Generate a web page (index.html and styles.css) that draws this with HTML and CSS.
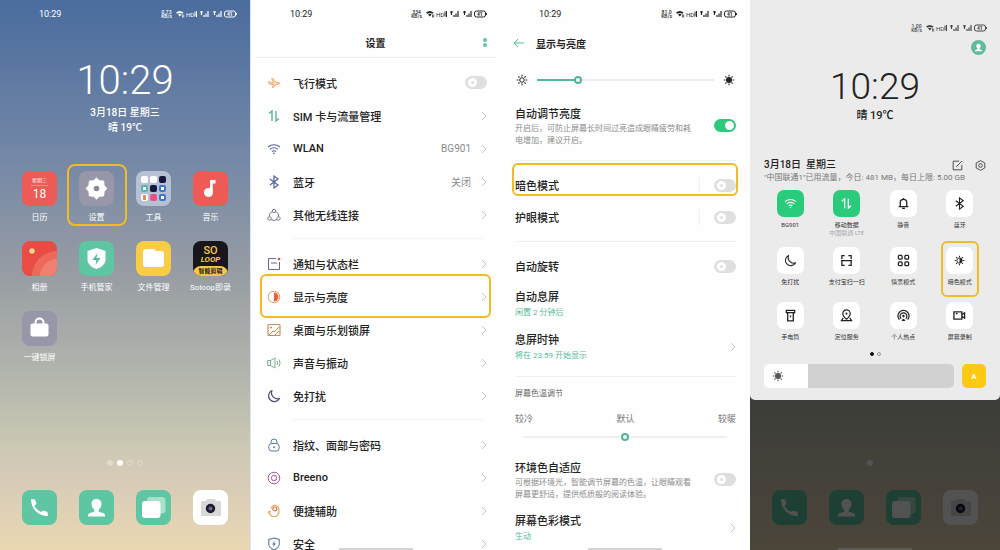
FILE: index.html
```html
<!DOCTYPE html>
<html lang="zh-CN">
<head>
<meta charset="UTF-8">
<meta name="viewport" content="width=device-width, initial-scale=1.0">
<title>暗色模式设置</title>
<link rel="stylesheet" href="styles.css">
</head>
<body>
    <!-- Icon symbols -->
    <svg class="sprite" aria-hidden="true">
        <symbol id="status" viewBox="0 0 61 10">
            <path d="M0 3.4Q3.8 .4 7.6 3.4L6.3 4.8Q3.8 3 1.3 4.8zM2 5.500Q3.8 4.200 5.600 5.500L3.800 7.600z" fill="currentColor"/>
            <path d="M6.500 8.500V5.500M7.700 5.500v3" stroke="currentColor" stroke-width=".7"/>
            <text x="10" y="7.500" font-size="6" fill="currentColor">HD</text>
            <path d="M19 2.500v5M20.500 2v6" stroke="currentColor" stroke-width="1"/>
            <path d="M24 3h3M25.500 2v4M28 8V6M30 8V4.500M32 8V2M37 3h3M38.500 2v4M41 8V6M43 8V4.500M45 8V2" fill="none" stroke="currentColor" stroke-width="1.200"/>
            <rect x="48.500" y="2" width="11" height="6" rx="2" fill="none" stroke="currentColor"/>
            <path d="M60.400 4v2" stroke="currentColor"/>
            <text x="51" y="7" font-size="5" font-weight="700" fill="currentColor">41</text>
        </symbol>
        <symbol id="chevron" viewBox="0 0 6 10"><path d="M1 1l4 4-4 4" fill="none" stroke="currentColor"/></symbol>
        <symbol id="plane" viewBox="0 0 14 14"><path d="M1.500 5.500l1.500.2 1 1 2.500-.2L4.500 2.500h1.500l3.500 4 2.500.2c1.300.4 1.300 1 0 1.400L9.500 8.300 6.500 11.500H5.300L6.500 8.400 2.500 8.200z" fill="#f7dcc0" stroke="currentColor"/></symbol>
        <symbol id="data" viewBox="0 0 14 14"><path d="M2 4.500L5 2v10M9 2v10l3-2.500" fill="none" stroke="currentColor" stroke-width="1.400"/></symbol>
        <symbol id="wifi" viewBox="0 0 14 14"><path d="M1 5q6-4.500 12 0M3 7.300q4-3 8 0M5 9.500q2-1.500 4 0" fill="none" stroke="currentColor" stroke-width="1.100"/><path d="M5.800 10.800h2.400L7 12.400z" fill="currentColor"/></symbol>
        <symbol id="bluetooth" viewBox="0 0 14 14"><path d="M3 4l8 6-4 3V1l4 3-8 6" fill="none" stroke="currentColor" stroke-width="1.200"/></symbol>
        <symbol id="share" viewBox="0 0 14 14"><g fill="none" stroke="currentColor"><circle cx="7" cy="3" r="1.700"/><circle cx="2.500" cy="10.500" r="1.700"/><circle cx="11.500" cy="10.500" r="1.700"/><path d="M5.300 3.500Q2 5 2.300 8.700M8.700 3.500Q12 5 11.700 8.700M4 11.600q3 1.600 6 0"/></g></symbol>
        <symbol id="notice" viewBox="0 0 14 14"><path d="M9 1.500H1.500v11h11V5M4 6h6" fill="none" stroke="#6d6787"/><circle cx="12" cy="2" r="1.300" fill="#d4504c"/></symbol>
        <symbol id="contrast" viewBox="0 0 14 14"><circle cx="7" cy="7" r="5.800" fill="none" stroke="#dfa45e"/><path d="M7 2.500a4.500 4.500 0 010 9z" fill="#f0603e"/></symbol>
        <symbol id="wallpaper" viewBox="0 0 14 14"><rect x="1" y="1.500" width="12" height="11" rx="1" fill="none" stroke="currentColor" stroke-width="1.200"/><path d="M2 12l4-4 1 1 5-5M8 12l4-4M3 4.500h2M4 3.500v2" fill="none" stroke="currentColor"/></symbol>
        <symbol id="speaker" viewBox="0 0 14 14"><path d="M3.500 4.500H.7v5h2.800M3.500 4.500L8 2v10L3.500 9.500zM10 5q1.200 2 0 4M12 3.500q2.200 3.500 0 7" fill="none" stroke="currentColor"/></symbol>
        <symbol id="moon" viewBox="0 0 14 14"><path d="M5 1.500A5.800 5.800 0 1012.500 9.500 6 6 0 015 1.500z" fill="none" stroke="currentColor" stroke-width="1.200" stroke-linejoin="round"/></symbol>
        <symbol id="lock" viewBox="0 0 14 14"><rect x="1.800" y="5.500" width="10.400" height="7.500" rx="3" fill="none" stroke="currentColor"/><path d="M4 5.500V4a3 3 0 016 0v1.500" fill="none" stroke="currentColor"/><circle cx="7" cy="9.200" r="1" fill="currentColor"/></symbol>
        <symbol id="breeno" viewBox="0 0 14 14"><circle cx="7" cy="7" r="5.800" fill="none" stroke="currentColor"/><circle cx="7" cy="7" r="2.600" fill="none" stroke="#b975b8" stroke-width="1.200"/></symbol>
        <symbol id="assist" viewBox="0 0 14 14"><path d="M4 8L2 7.500q-1 .5 0 1.500l3 3.500h4q3-2 3-6T9 1.500 3.800 4.500" fill="none" stroke="#e2ae58" stroke-width="1.200"/><circle cx="7.800" cy="5" r="2" fill="none" stroke="#d4785a" stroke-width="1.200"/></symbol>
        <symbol id="shield" viewBox="0 0 14 14"><path d="M7 1l5.200 1.500v5.500Q11.500 11 7 13 2.500 11 1.800 8V2.500z" fill="none" stroke="currentColor" stroke-width="1.100"/><path d="M7.800 4L5 7.500h1.600L6.200 10 9 6.500H7.400z" fill="currentColor"/></symbol>
        <symbol id="back" viewBox="0 0 12 10"><path d="M5 1L1.200 5 5 9M1.200 5H11" fill="none" stroke="currentColor"/></symbol>
        <symbol id="rays" viewBox="0 0 14 14"><path d="M7 1.800v1.700M7 10.500v1.700M1.800 7h1.700M10.500 7h1.700M3.300 3.300l1.200 1.200M9.500 9.500l1.200 1.200M3.300 10.700l1.200-1.200M9.500 4.500l1.200-1.200" fill="none" stroke="currentColor" stroke-width="1.100"/></symbol>
        <symbol id="sun" viewBox="0 0 14 14"><use href="#rays"/><circle cx="7" cy="7" r="2.300" fill="none" stroke="currentColor"/></symbol>
        <symbol id="sun-full" viewBox="0 0 14 14"><use href="#rays"/><circle cx="7" cy="7" r="3" fill="currentColor"/></symbol>
        <symbol id="sun-half" viewBox="0 0 14 14"><use href="#rays"/><circle cx="7" cy="7" r="2.800" fill="none" stroke="currentColor"/><path d="M7 4.200a2.800 2.800 0 010 5.600z" fill="currentColor"/></symbol>
        <symbol id="bell" viewBox="0 0 14 14"><path d="M3.500 10V6a3.500 3.500 0 017 0v4M1.800 10.300h10.400M7 1v1.500M5.500 12.300h3" fill="none" stroke="currentColor" stroke-width="1.400"/></symbol>
        <symbol id="scan" viewBox="0 0 14 14"><path d="M5 1.800H2V5.500M9 1.800h3V5.500M2 7.200v5h3M12 7.200v5H9M1 7.200h12" fill="none" stroke="currentColor" stroke-width="1.400"/></symbol>
        <symbol id="scenes" viewBox="0 0 14 14"><g fill="none" stroke="currentColor" stroke-width="1.400"><rect x="1.500" y="1.500" width="4" height="4" rx="1"/><rect x="8.500" y="1.500" width="4" height="4" rx="1"/><rect x="1.500" y="8.500" width="4" height="4" rx="1"/><rect x="8.500" y="8.500" width="4" height="4" rx="1"/></g></symbol>
        <symbol id="torch" viewBox="0 0 14 14"><path d="M2.500 1.500h9v2.300l-1.500 1v8H4v-8l-1.500-1zM2.500 4h9M7 7v2" fill="none" stroke="currentColor" stroke-width="1.400"/></symbol>
        <symbol id="location" viewBox="0 0 14 14"><path d="M7 11Q3 7.500 3 5a4 4 0 018 0q0 2.500-4 6zM3.500 9.500L1.500 12.500h11l-2-3" fill="none" stroke="currentColor" stroke-width="1.300"/><circle cx="7" cy="5" r="1.100" fill="currentColor"/></symbol>
        <symbol id="hotspot" viewBox="0 0 14 14"><path d="M2.500 11.500a6 6 0 119 0M4.500 10.500a3.700 3.700 0 115 0" fill="none" stroke="currentColor" stroke-width="1.300"/><circle cx="7" cy="7.500" r="1.300" fill="currentColor"/><path d="M5 13q2-5 4 0z" fill="currentColor"/></symbol>
        <symbol id="record" viewBox="0 0 14 14"><path d="M1 3h8.500v8H1zM9.500 6l3-1.800v5.600l-3-1.800M3 5h2" fill="none" stroke="currentColor" stroke-width="1.400"/></symbol>
        <symbol id="edit" viewBox="0 0 14 14"><path d="M9 1.500H1.500v11h11V6M5.500 8.500l7-7" fill="none" stroke="currentColor" stroke-width="1.200"/></symbol>
        <symbol id="hex" viewBox="0 0 14 14"><path d="M7 .8l5.500 3.100v6.200L7 13.200l-5.500-3.100V3.900z" fill="none" stroke="currentColor" stroke-width="1.200" stroke-linejoin="round"/><circle cx="7" cy="7" r="2.300" fill="none" stroke="currentColor" stroke-width="1.200"/></symbol>
        <symbol id="person" viewBox="0 0 35 35"><path d="M17.500 9c3.500 0 5 2.500 5 5 0 2.700-1.200 4-2.700 5.500v2.200l5 1.500q1.200.5 1.200 3.300H9q0-2.800 1.200-3.300l5-1.500v-2.200C13.700 18 12.500 16.700 12.500 14c0-2.500 1.500-5 5-5z" fill="#fff"/></symbol>
        <symbol id="phone" viewBox="0 0 35 35"><path d="M9 9l4 .5 1.500 4-2 2.500q2 4 6.500 6l2.500-1.500 4 1.500.5 4Q20 26.500 14 21.500 9 16.500 9 9z" fill="#fff"/></symbol>
        <symbol id="cards" viewBox="0 0 35 35"><rect x="11" y="7" width="18.500" height="16.500" rx="3" fill="#a7e0cb"/><rect x="6" y="11" width="18.500" height="17" rx="3" fill="#fff"/></symbol>
        <symbol id="camera" viewBox="0 0 35 35"><path d="M8 11h5l1-2h8l1 2h5v15H8z" fill="#d8d8d8"/><circle cx="17.500" cy="18.500" r="4.700" fill="#1d1b2c"/><circle cx="17.500" cy="18.500" r="2" fill="#6c6790"/></symbol>
    </svg>

    <main class="phones">
        <!-- Home screen -->
        <section class="phone home">
            <header class="status light">
                <time>10:29</time>
                <span class="speed">0.73<br>KB/s</span>
                <svg class="status-icons"><use href="#status"/></svg>
            </header>
            <div class="clock">10:29</div>
            <p class="date">3月18日 星期三</p>
            <p class="date">晴 19℃</p>

            <nav class="apps">
                <a href="#" class="app"><span class="tile red calendar"><small>星期三</small><b>18</b></span>日历</a>
                <a href="#" class="app marked"><span class="tile grey"><svg viewBox="0 0 35 35"><path d="M17.500 7l3 2.800 4.200.3.300 4.200 2.800 3.200-2.800 3.200-.3 4.200-4.200.3-3 2.800-3-2.800-4.200-.3-.3-4.200-2.800-3.200 2.800-3.200.3-4.200 4.200-.3z" fill="#fff" stroke="#fff" stroke-linejoin="round"/><circle cx="17.500" cy="17.500" r="2.800" fill="#8b8899"/></svg></span>设置</a>
                <a href="#" class="app"><span class="tile folder"><i></i><i></i><i class="navy"></i><i class="teal"></i><i class="navy"></i><i class="blue"></i><i class="flame"></i><i class="pink"></i><i class="blue"></i></span>工具</a>
                <a href="#" class="app"><span class="tile red"><svg viewBox="0 0 35 35"><path d="M17 9h5.500v3.500H19.500v9" fill="#fff"/><path d="M17 9h2.500v12H17z" fill="#fff"/><circle cx="15.500" cy="21.500" r="4.500" fill="#fff"/></svg></span>音乐</a>
                <a href="#" class="app"><span class="tile photos"><svg viewBox="0 0 35 35"><circle cx="35" cy="35" r="25" fill="#ed695c"/><circle cx="35" cy="35" r="17" fill="#f07f70"/><circle cx="10" cy="10" r="2.700" fill="#fad590"/></svg></span>相册</a>
                <a href="#" class="app"><span class="tile green"><svg viewBox="0 0 35 35"><path d="M17.500 7l9 3v10q-1 5-9 8-8-3-9-8V10z" fill="#fff"/><path d="M18.500 12l-5 7h4l-1 5 5-7h-4z" fill="#50bd97"/></svg></span>手机管家</a>
                <a href="#" class="app"><span class="tile yellow"><svg viewBox="0 0 35 35"><path d="M7 11q0-3 3-3h8l2 2h5q3 0 3 3v10q0 3-3 3H10q-3 0-3-3z" fill="#fff"/></svg></span>文件管理</a>
                <a href="#" class="app"><span class="tile soloop"><b>SO</b><em>LOOP</em><small>智能剪辑</small></span>Soloop即录</a>
                <a href="#" class="app"><span class="tile grey"><svg viewBox="0 0 35 35"><path d="M13.500 14v-2.500a4 4 0 018 0V14" fill="none" stroke="#fff" stroke-width="2"/><rect x="8.500" y="12.500" width="18" height="13" rx="2" fill="#fff"/></svg></span>一键锁屏</a>
            </nav>

            <div class="dots"><i></i><i class="on"></i><i class="ring"></i><i class="ring"></i></div>
            <nav class="dock">
                <a href="#" class="tile green" aria-label="电话"><svg><use href="#phone"/></svg></a>
                <a href="#" class="tile green" aria-label="联系人"><svg><use href="#person"/></svg></a>
                <a href="#" class="tile green" aria-label="信息"><svg><use href="#cards"/></svg></a>
                <a href="#" class="tile white" aria-label="相机"><svg><use href="#camera"/></svg></a>
            </nav>
        </section>

        <!-- Settings list -->
        <section class="phone settings">
            <header class="status">
                <time>10:29</time>
                <span class="speed">334<br>KB/s</span>
                <svg class="status-icons"><use href="#status"/></svg>
            </header>
            <div class="title-bar">
                <h1>设置</h1>
                <button class="more" aria-label="更多"><i></i><i></i></button>
            </div>
            <div class="list">
                <label class="row"><svg class="orange"><use href="#plane"/></svg><span>飞行模式</span><input type="checkbox" class="switch"></label>
                <a href="#" class="row"><svg class="mint"><use href="#data"/></svg><span>SIM 卡与流量管理</span><svg class="chevron"><use href="#chevron"/></svg></a>
                <a href="#" class="row"><svg class="indigo"><use href="#wifi"/></svg><span>WLAN</span><em>BG901</em><svg class="chevron"><use href="#chevron"/></svg></a>
                <a href="#" class="row"><svg class="indigo"><use href="#bluetooth"/></svg><span>蓝牙</span><em>关闭</em><svg class="chevron"><use href="#chevron"/></svg></a>
                <a href="#" class="row"><svg class="slate"><use href="#share"/></svg><span>其他无线连接</span><svg class="chevron"><use href="#chevron"/></svg></a>
            </div>
            <div class="list">
                <a href="#" class="row"><svg><use href="#notice"/></svg><span>通知与状态栏</span><svg class="chevron"><use href="#chevron"/></svg></a>
                <a href="#" class="row marked"><svg><use href="#contrast"/></svg><span>显示与亮度</span><svg class="chevron"><use href="#chevron"/></svg></a>
                <a href="#" class="row"><svg class="bronze"><use href="#wallpaper"/></svg><span>桌面与乐划锁屏</span><svg class="chevron"><use href="#chevron"/></svg></a>
                <a href="#" class="row"><svg class="sage"><use href="#speaker"/></svg><span>声音与振动</span><svg class="chevron"><use href="#chevron"/></svg></a>
                <a href="#" class="row"><svg class="navy"><use href="#moon"/></svg><span>免打扰</span><svg class="chevron"><use href="#chevron"/></svg></a>
            </div>
            <div class="list">
                <a href="#" class="row"><svg class="steel"><use href="#lock"/></svg><span>指纹、面部与密码</span><svg class="chevron"><use href="#chevron"/></svg></a>
                <a href="#" class="row"><svg class="plum"><use href="#breeno"/></svg><span>Breeno</span><svg class="chevron"><use href="#chevron"/></svg></a>
                <a href="#" class="row"><svg><use href="#assist"/></svg><span>便捷辅助</span><svg class="chevron"><use href="#chevron"/></svg></a>
                <a href="#" class="row"><svg class="steel"><use href="#shield"/></svg><span>安全</span><svg class="chevron"><use href="#chevron"/></svg></a>
            </div>
            <div class="home-bar"></div>
        </section>

        <!-- Display and brightness -->
        <section class="phone display">
            <header class="status">
                <time>10:29</time>
                <span class="speed">81.0<br>KB/s</span>
                <svg class="status-icons"><use href="#status"/></svg>
            </header>
            <div class="title-bar">
                <a href="#" class="back" aria-label="返回"><svg><use href="#back"/></svg></a>
                <h1>显示与亮度</h1>
            </div>
            <div class="group first">
                <div class="bright">
                    <svg><use href="#sun"/></svg>
                    <input type="range" class="range" min="0" max="100" value="22" aria-label="亮度">
                    <svg><use href="#sun-full"/></svg>
                </div>
                <label class="opt long">
                    <span>自动调节亮度<small>开启后，可防止屏幕长时间过亮造成眼睛疲劳和耗电增加，建议开启。</small></span>
                    <input type="checkbox" class="switch" checked>
                </label>
            </div>
            <div class="group">
                <label class="opt marked"><span>暗色模式</span><i class="bar"></i><input type="checkbox" class="switch"></label>
                <label class="opt"><span>护眼模式</span><i class="bar"></i><input type="checkbox" class="switch"></label>
            </div>
            <div class="group">
                <label class="opt"><span>自动旋转</span><input type="checkbox" class="switch"></label>
                <a href="#" class="opt sub"><span>自动息屏<em>闲置 2 分钟后</em></span></a>
                <a href="#" class="opt sub"><span>息屏时钟<em>将在 23:59 开始显示</em></span><svg class="chevron"><use href="#chevron"/></svg></a>
            </div>
            <div class="group">
                <h2>屏幕色温调节</h2>
                <div class="scale"><span>较冷</span><span>默认</span><span>较暖</span></div>
                <input type="range" class="range temp" min="0" max="100" value="50" aria-label="屏幕色温">
                <label class="opt long">
                    <span>环境色自适应<small>可根据环境光，智能调节屏幕的色温，让眼睛观看屏幕更舒适，提供纸质般的阅读体验。</small></span>
                    <input type="checkbox" class="switch">
                </label>
                <a href="#" class="opt sub"><span>屏幕色彩模式<em>生动</em></span><svg class="chevron"><use href="#chevron"/></svg></a>
            </div>
            <div class="home-bar"></div>
        </section>

        <!-- Control centre -->
        <section class="phone control">
            <div class="sheet">
                <header class="status">
                    <span class="speed">1.00<br>KB/s</span>
                    <svg class="status-icons"><use href="#status"/></svg>
                </header>
                <div class="user"><a href="#" aria-label="账户"><svg><use href="#person"/></svg></a></div>
                <div class="clock">10:29</div>
                <p class="weather">晴 19℃</p>
                <div class="info">
                    <div>
                        <h2>3月18日&nbsp; 星期三</h2>
                        <p>"中国联通1"已用流量，今日: 481 MB，每日上限: 5.00 GB</p>
                    </div>
                    <button aria-label="编辑"><svg><use href="#edit"/></svg></button>
                    <button aria-label="设置"><svg><use href="#hex"/></svg></button>
                </div>
                <div class="toggles">
                    <button class="toggle on"><svg><use href="#wifi"/></svg>BG901</button>
                    <button class="toggle on"><svg><use href="#data"/></svg>移动数据<small>中国联通 LTE</small></button>
                    <button class="toggle"><svg><use href="#bell"/></svg>静音</button>
                    <button class="toggle"><svg><use href="#bluetooth"/></svg>蓝牙</button>
                    <button class="toggle"><svg><use href="#moon"/></svg>免打扰</button>
                    <button class="toggle"><svg><use href="#scan"/></svg>支付宝扫一扫</button>
                    <button class="toggle"><svg><use href="#scenes"/></svg>情景模式</button>
                    <button class="toggle marked"><svg><use href="#sun-half"/></svg>暗色模式</button>
                    <button class="toggle"><svg><use href="#torch"/></svg>手电筒</button>
                    <button class="toggle"><svg><use href="#location"/></svg>定位服务</button>
                    <button class="toggle"><svg><use href="#hotspot"/></svg>个人热点</button>
                    <button class="toggle"><svg><use href="#record"/></svg>屏幕录制</button>
                </div>
                <div class="pages"><i class="on"></i><i></i></div>
                <div class="level">
                    <div class="level-bar">
                        <input type="range" min="0" max="100" value="23" aria-label="亮度">
                        <svg><use href="#sun-full"/></svg>
                    </div>
                    <button class="auto">A</button>
                </div>
            </div>
            <div class="dots"><i class="off"></i><i class="on"></i><i class="off"></i><i class="off"></i></div>
            <nav class="dock">
                <a href="#" class="tile green" aria-label="电话"><svg><use href="#phone"/></svg></a>
                <a href="#" class="tile green" aria-label="联系人"><svg><use href="#person"/></svg></a>
                <a href="#" class="tile green" aria-label="信息"><svg><use href="#cards"/></svg></a>
                <a href="#" class="tile white" aria-label="相机"><svg><use href="#camera"/></svg></a>
            </nav>
            <div class="home-bar"></div>
        </section>
    </main>
</body>
</html>
```
FILE: styles.css
```css
* {
    box-sizing: border-box;
}
body {
    margin: 0;
    font-family: Roboto, "Noto Sans CJK SC", sans-serif;
    font-size: 11px;
    color: #222;
}
h1, h2, p {
    margin: 0;
}
a {
    color: inherit;
    text-decoration: none;
}
button {
    border: 0;
    padding: 0;
    background: none;
    font-family: inherit;
    color: inherit;
    cursor: pointer;
}
em, i {
    font-style: normal;
}
.sprite {
    display: none;
}
.phones {
    display: grid;
    grid-template-columns: repeat(4, 1fr);
    height: 100vh;
    min-height: 550px;
}
.phone {
    position: relative;
    display: flex;
    flex-direction: column;
    overflow: hidden;
    background: #fefefe;
}

/* Status bar */
.status {
    display: flex;
    align-items: center;
    flex: none;
    height: 28px;
    padding: 0 13px 0 39px;
    font-size: 9px;
}
.status.light {
    color: #fff;
}
.speed {
    margin-left: auto;
    margin-right: 4px;
    font-size: 5px;
    font-weight: 500;
    line-height: 4px;
    text-align: center;
}
.status-icons {
    width: 61px;
    height: 10px;
}

/* Yellow frame round the item to tap */
.marked {
    position: relative;
}
.marked::after {
    content: "";
    position: absolute;
    border: 2px solid #f3bb22;
    border-radius: 6px;
    pointer-events: none;
}

/* Home screen */
.home, .control {
    background: linear-gradient(#4a6c9e 0%, #7689a7 30%, #989da3 50%, #b2b5ad 68%, #c9c7b3 80%, #d8ccb8 88%, #ead8b2 100%);
}
.clock {
    font-weight: 300;
    text-align: center;
}
.home .clock {
    margin-top: 29px;
    font-size: 40px;
    line-height: 48px;
    color: #fff;
}
.date {
    font-size: 10px;
    font-weight: 500;
    line-height: 15px;
    text-align: center;
    color: #fff;
}
.apps {
    display: grid;
    grid-template-columns: repeat(4, 1fr);
    row-gap: 16px;
    padding: 36px 11px 0;
}
.app {
    display: flex;
    flex-direction: column;
    align-items: center;
    gap: 5px;
    font-size: 8px;
    line-height: 14px;
    color: #fff;
}
.app.marked::after {
    inset: -7px -2px -1px -1px;
    border-radius: 8px;
}
.tile {
    display: block;
    width: 35px;
    height: 35px;
    border-radius: 8px;
    overflow: hidden;
}
.tile svg {
    display: block;
    width: 35px;
    height: 35px;
}
.red {
    background: #ee5a55;
}
.grey {
    background: #9896a9;
}
.green {
    background: #5fc6a3;
}
.yellow {
    background: #f9cc45;
}
.white {
    background: #fff;
}
.photos {
    background: #e84c44;
}
.calendar {
    display: flex;
    flex-direction: column;
    align-items: center;
    padding-top: 4px;
}
.calendar small {
    padding: 0 1px;
    border-bottom: 1px solid #f58f86;
    font-size: 5px;
    line-height: 10px;
}
.calendar b {
    font-size: 12px;
    font-weight: 400;
    line-height: 17px;
}
.folder {
    display: grid;
    grid-template-columns: repeat(3, 7px);
    grid-auto-rows: 7px;
    gap: 2px;
    place-content: center;
    background: #b6c1d6;
}
.folder i {
    border-radius: 2px;
    background: #fff;
}
.folder .navy {
    background: #17193c;
}
.folder .blue {
    border: 2px solid #3b78cd;
}
.folder .teal {
    border: 2px solid #58b3ae;
}
.folder .flame {
    border: solid #fff;
    border-width: 1px 2px;
    background: #e8894d;
}
.folder .pink {
    background: #ec4e86;
}
.soloop {
    display: flex;
    flex-direction: column;
    align-items: center;
    padding-top: 5px;
    background: #17161a;
    color: #f6c844;
}
.soloop b, .soloop em {
    font-size: 11px;
    font-weight: 500;
    line-height: 9px;
}
.soloop em {
    font-size: 8px;
    font-style: italic;
    font-weight: 700;
}
.soloop small {
    width: 100%;
    margin-top: 2px;
    border-radius: 8px 8px 0 0;
    background: #f6c844;
    font-size: 6px;
    font-weight: 700;
    line-height: 10px;
    text-align: center;
    color: #222;
}
.dots {
    display: flex;
    justify-content: center;
    gap: 4px;
    margin-top: auto;
}
.dots i {
    width: 6px;
    height: 6px;
    border-radius: 50%;
    background: #dedccf;
}
.dots .on {
    background: #fff;
}
.dots .ring {
    border: 1px solid #e2dccd;
    background: none;
}
.dots .off {
    background: none;
}
.dock {
    display: grid;
    grid-template-columns: repeat(4, 1fr);
    justify-items: center;
    padding: 24px 11px 25px;
}
.home-bar {
    position: absolute;
    left: 50%;
    bottom: 0;
    width: 74px;
    height: 2px;
    margin-left: -37px;
    background: #d4d4d4;
}

/* Title bars */
.title-bar {
    position: relative;
    display: flex;
    align-items: center;
    flex: none;
    height: 30px;
    padding: 0 14px 0 13px;
}
h1 {
    font-size: 10px;
    font-weight: 700;
}
.settings {
    border-left: 1px solid #dbe5f5;
}
.settings .title-bar {
    justify-content: center;
    margin: 0 4px 8px 5px;
    border-bottom: 1px solid #f1f1f1;
}
.more {
    position: absolute;
    right: 9px;
    display: grid;
    gap: 1px;
}
.more i {
    width: 4px;
    height: 4px;
    border-radius: 50%;
    background: #62c3a1;
}
.back {
    display: flex;
    margin-right: 11px;
    color: #4fc09a;
}
.back svg {
    width: 12px;
    height: 10px;
}

/* Settings rows */
.list {
    flex: none;
    padding: 0 13px 0 16px;
}
.list + .list {
    margin-top: 7px;
    padding-top: 9px;
    background: linear-gradient(#f3f3f3, #f3f3f3) 42px 0 / calc(100% - 58px) 1px no-repeat;
}
.row {
    display: flex;
    align-items: center;
    height: 33px;
}
.row svg {
    flex: none;
    width: 14px;
    height: 14px;
}
.row span {
    flex: 1;
    margin-left: 12px;
    font-weight: 500;
}
.row em {
    margin-right: 10px;
    font-size: 10px;
    color: #8a8a8a;
}
.row .chevron, .chevron {
    flex: none;
    width: 6px;
    height: 10px;
    color: #c4c4c4;
}
.row.marked::after {
    inset: -6px -4px -5px -7px;
}
.orange {
    color: #ebae72;
}
.mint {
    color: #58b690;
}
.indigo {
    color: #5563a3;
}
.slate {
    color: #777a86;
}
.bronze {
    color: #c98f58;
}
.sage {
    color: #79ab92;
}
svg.navy {
    color: #4c4d76;
}
.steel {
    color: #5b7ba1;
}
.plum {
    color: #9c648f;
}

/* Switches and sliders */
.switch {
    appearance: none;
    flex: none;
    display: flex;
    align-items: center;
    width: 22px;
    height: 13px;
    margin: 0;
    padding: 0 3px;
    border-radius: 7px;
    background: #dfdfdf;
}
.switch::before {
    content: "";
    box-sizing: border-box;
    width: 9px;
    height: 9px;
    border: 3px solid #fff;
    border-radius: 50%;
    background: #dfdfdf;
}
.switch:checked {
    justify-content: flex-end;
    padding: 0 2px;
    background: #2dc97c;
}
.switch:checked::before {
    background: #fff;
}
.range {
    appearance: none;
    flex: 1;
    min-width: 0;
    height: 16px;
    margin: 0;
    background: linear-gradient(90deg, #55bb97 22%, #eee 22%) center / 100% 2px no-repeat;
}
.range::-webkit-slider-thumb {
    appearance: none;
    width: 8px;
    height: 8px;
    border: 2px solid #4db892;
    border-radius: 50%;
    background: #fff;
}

/* Display options */
.group {
    flex: none;
    margin: 0 14px 0 15px;
    padding: 8px 0;
    border-top: 1px solid #f1f1f1;
}
.group.first {
    padding-top: 0;
    border-top: 0;
}
.bright {
    display: flex;
    align-items: center;
    gap: 8px;
    height: 43px;
}
.bright svg {
    width: 14px;
    height: 14px;
}
.opt {
    display: flex;
    align-items: center;
    min-height: 32px;
}
.opt span {
    flex: 1;
    padding-top: 3px;
    font-weight: 500;
    line-height: 16px;
}
.opt.long {
    padding: 3px 0 5px;
}
.opt small {
    display: block;
    width: 182px;
    font-size: 8px;
    font-weight: 400;
    line-height: 12px;
    color: #8c8c8c;
}
.opt em {
    display: block;
    font-size: 8px;
    font-weight: 400;
    line-height: 14px;
    color: #56bd98;
}
.opt.sub {
    padding: 5px 0;
}
.opt .bar {
    width: 1px;
    height: 16px;
    margin-right: 14px;
    background: #f0f0f0;
}
.opt.marked::after {
    inset: -6px -2px 5px -3px;
}
.group h2 {
    font-size: 8px;
    font-weight: 400;
    line-height: 18px;
    color: #666;
}
.scale {
    display: flex;
    justify-content: space-between;
    margin-top: 9px;
    font-size: 9px;
    line-height: 14px;
    color: #777;
}
.range.temp {
    display: block;
    width: calc(100% - 17px);
    margin: 3px 9px 10px 8px;
    background: linear-gradient(#eee, #eee) center / 100% 2px no-repeat;
}

/* Control centre */
.control::before {
    content: "";
    position: absolute;
    inset: 0;
    z-index: 1;
    background: rgba(0, 0, 0, .68);
}
.control .home-bar {
    z-index: 1;
    background: #5f5b56;
}
.sheet {
    position: relative;
    z-index: 2;
    padding: 14px 14px 12px;
    border-radius: 0 0 5px 5px;
    background: #ebebeb;
}
.sheet .status {
    margin-right: -14px;
    color: #444;
}
.user {
    display: flex;
    justify-content: flex-end;
    height: 15px;
    margin-top: -2px;
}
.user a {
    width: 15px;
    height: 15px;
    border-radius: 50%;
    background: #5dbc9a;
}
.user svg {
    display: block;
    width: 15px;
    height: 15px;
}
.sheet .clock {
    margin-top: 10px;
    font-size: 37px;
    line-height: 43px;
}
.weather {
    font-size: 11px;
    font-weight: 500;
    line-height: 15px;
    text-align: center;
}
.info {
    display: flex;
    align-items: flex-start;
    gap: 12px;
    margin-top: 35px;
}
.info div {
    flex: 1;
    min-width: 0;
}
.info h2 {
    font-size: 10px;
    font-weight: 500;
    line-height: 14px;
}
.info p {
    font-size: 8px;
    line-height: 12px;
    white-space: nowrap;
    color: #777;
}
.info button {
    height: 14px;
}
.info svg {
    display: block;
    width: 11px;
    height: 11px;
    color: #444;
}
.toggles {
    display: grid;
    grid-template-columns: repeat(4, 1fr);
    grid-template-rows: 57px 55px 40px;
    margin: 6px -2px 0;
}
.toggle {
    display: flex;
    flex-direction: column;
    align-items: center;
    font-size: 6px;
    line-height: 8px;
    color: #333;
    white-space: nowrap;
}
.toggle svg {
    width: 27px;
    height: 27px;
    margin-bottom: 4px;
    padding: 7px;
    border-radius: 7px;
    background: #fff;
    color: #222;
}
.toggle.on svg {
    background: #2bcb7c;
    color: #fff;
}
.toggle small {
    font-size: 6px;
    color: #aaa;
}
.toggle.marked::after {
    inset: -6px 9px 5px;
}
.pages {
    display: flex;
    justify-content: center;
    gap: 3px;
    margin: 10px 0 8px;
}
.pages i {
    width: 4px;
    height: 4px;
    border: 1px solid #999;
    border-radius: 50%;
}
.pages .on {
    border-color: #111;
    background: #111;
}
.level {
    display: flex;
    gap: 8px;
}
.level-bar {
    position: relative;
    flex: 1;
}
.level-bar input {
    appearance: none;
    display: block;
    width: 100%;
    height: 24px;
    margin: 0;
    border-radius: 5px;
    background: linear-gradient(90deg, #fff 23%, #d1d1d1 23%);
}
.level-bar input::-webkit-slider-thumb {
    appearance: none;
    width: 1px;
    height: 24px;
}
.level-bar svg {
    position: absolute;
    left: 7px;
    top: 5px;
    width: 14px;
    height: 14px;
    color: #555;
    pointer-events: none;
}
.auto {
    width: 24px;
    height: 24px;
    border-radius: 5px;
    background: #fcc914;
    font-size: 8px;
    font-weight: 700;
    color: #fff;
}
```
